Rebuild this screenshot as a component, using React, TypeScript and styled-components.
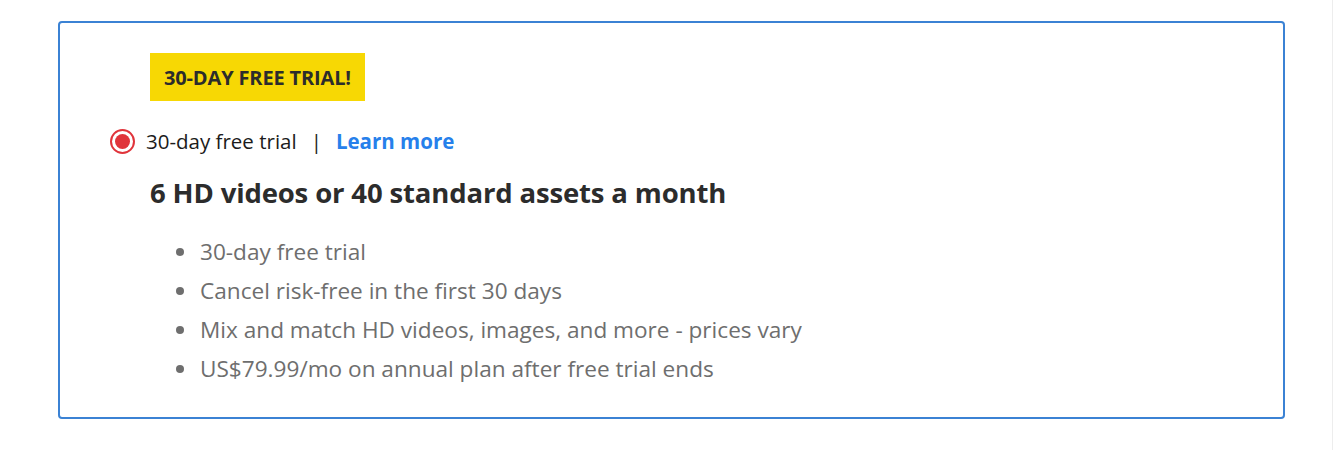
import React from 'react';
import { createGlobalStyle, styled } from 'styled-components';

const GlobalStyle = createGlobalStyle`
  html, body {
    margin: 0;
    padding: 0;
    background: #ffffff;
  }
  body {
    font-family: 'Open Sans', 'Noto Sans', Arial, sans-serif;
    color: #2c2c2c;
  }
`;

const Page = styled.div`
  width: 1333px;
  height: 450px;
  box-sizing: border-box;
  padding: 21px 0 0 58px;
  border-right: 1px solid #ededed;
`;

const Card = styled.section`
  width: 1227px;
  height: 398px;
  box-sizing: border-box;
  border: 2px solid #3b82d4;
  border-radius: 4px;
  padding: 30px 0 0 50px;
  display: flex;
  flex-direction: column;
  align-items: flex-start;
`;

const Badge = styled.div`
  margin-left: 40px;
  height: 48px;
  padding: 0 14px 0 14px;
  display: flex;
  align-items: center;
  background: #f7d804;
  color: #2c2c2c;
  font-size: 20px;
  font-weight: 700;
  letter-spacing: -0.15px;
`;

const OptionRow = styled.label`
  margin-top: 26px;
  display: flex;
  align-items: center;
  gap: 11px;
  font-size: 20.5px;
  line-height: 28px;
  color: #1b1b1b;
`;

const Radio = styled.span`
  width: 25px;
  height: 25px;
  box-sizing: border-box;
  border-radius: 50%;
  border: 2px solid #e0343b;
  display: flex;
  align-items: center;
  justify-content: center;

  &::after {
    content: '';
    width: 15px;
    height: 15px;
    border-radius: 50%;
    background: #e0343b;
  }
`;

const Divider = styled.span`
  margin: 0 3px;
  color: #1b1b1b;
`;

const LearnMore = styled.a`
  color: #2680eb;
  font-weight: 700;
  text-decoration: none;
`;

const Heading = styled.h2`
  margin: 19px 0 0 40px;
  font-size: 27.5px;
  line-height: 38px;
  font-weight: 700;
  color: #2c2c2c;
  letter-spacing: -0.15px;
`;

const Features = styled.ul`
  margin: 20px 0 0 70px;
  padding: 0 0 0 20px;
  list-style: none;
`;

const Feature = styled.li`
  position: relative;
  font-size: 22.6px;
  line-height: 39px;
  color: #6e6e6e;

  &::before {
    content: '';
    position: absolute;
    left: -24px;
    top: 16px;
    width: 8px;
    height: 8px;
    border-radius: 50%;
    background: #6e6e6e;
  }
`;

const features = [
  '30-day free trial',
  'Cancel risk-free in the first 30 days',
  'Mix and match HD videos, images, and more - prices vary',
  'US$79.99/mo on annual plan after free trial ends',
];

export default function App() {
  return (
    <>
      <GlobalStyle />
      <Page>
        <Card>
          <Badge>30-DAY FREE TRIAL!</Badge>
          <OptionRow>
            <Radio />
            <span>30-day free trial</span>
            <Divider>|</Divider>
            <LearnMore href="#">Learn more</LearnMore>
          </OptionRow>
          <Heading>6 HD videos or 40 standard assets a month</Heading>
          <Features>
            {features.map((f) => (
              <Feature key={f}>{f}</Feature>
            ))}
          </Features>
        </Card>
      </Page>
    </>
  );
}
